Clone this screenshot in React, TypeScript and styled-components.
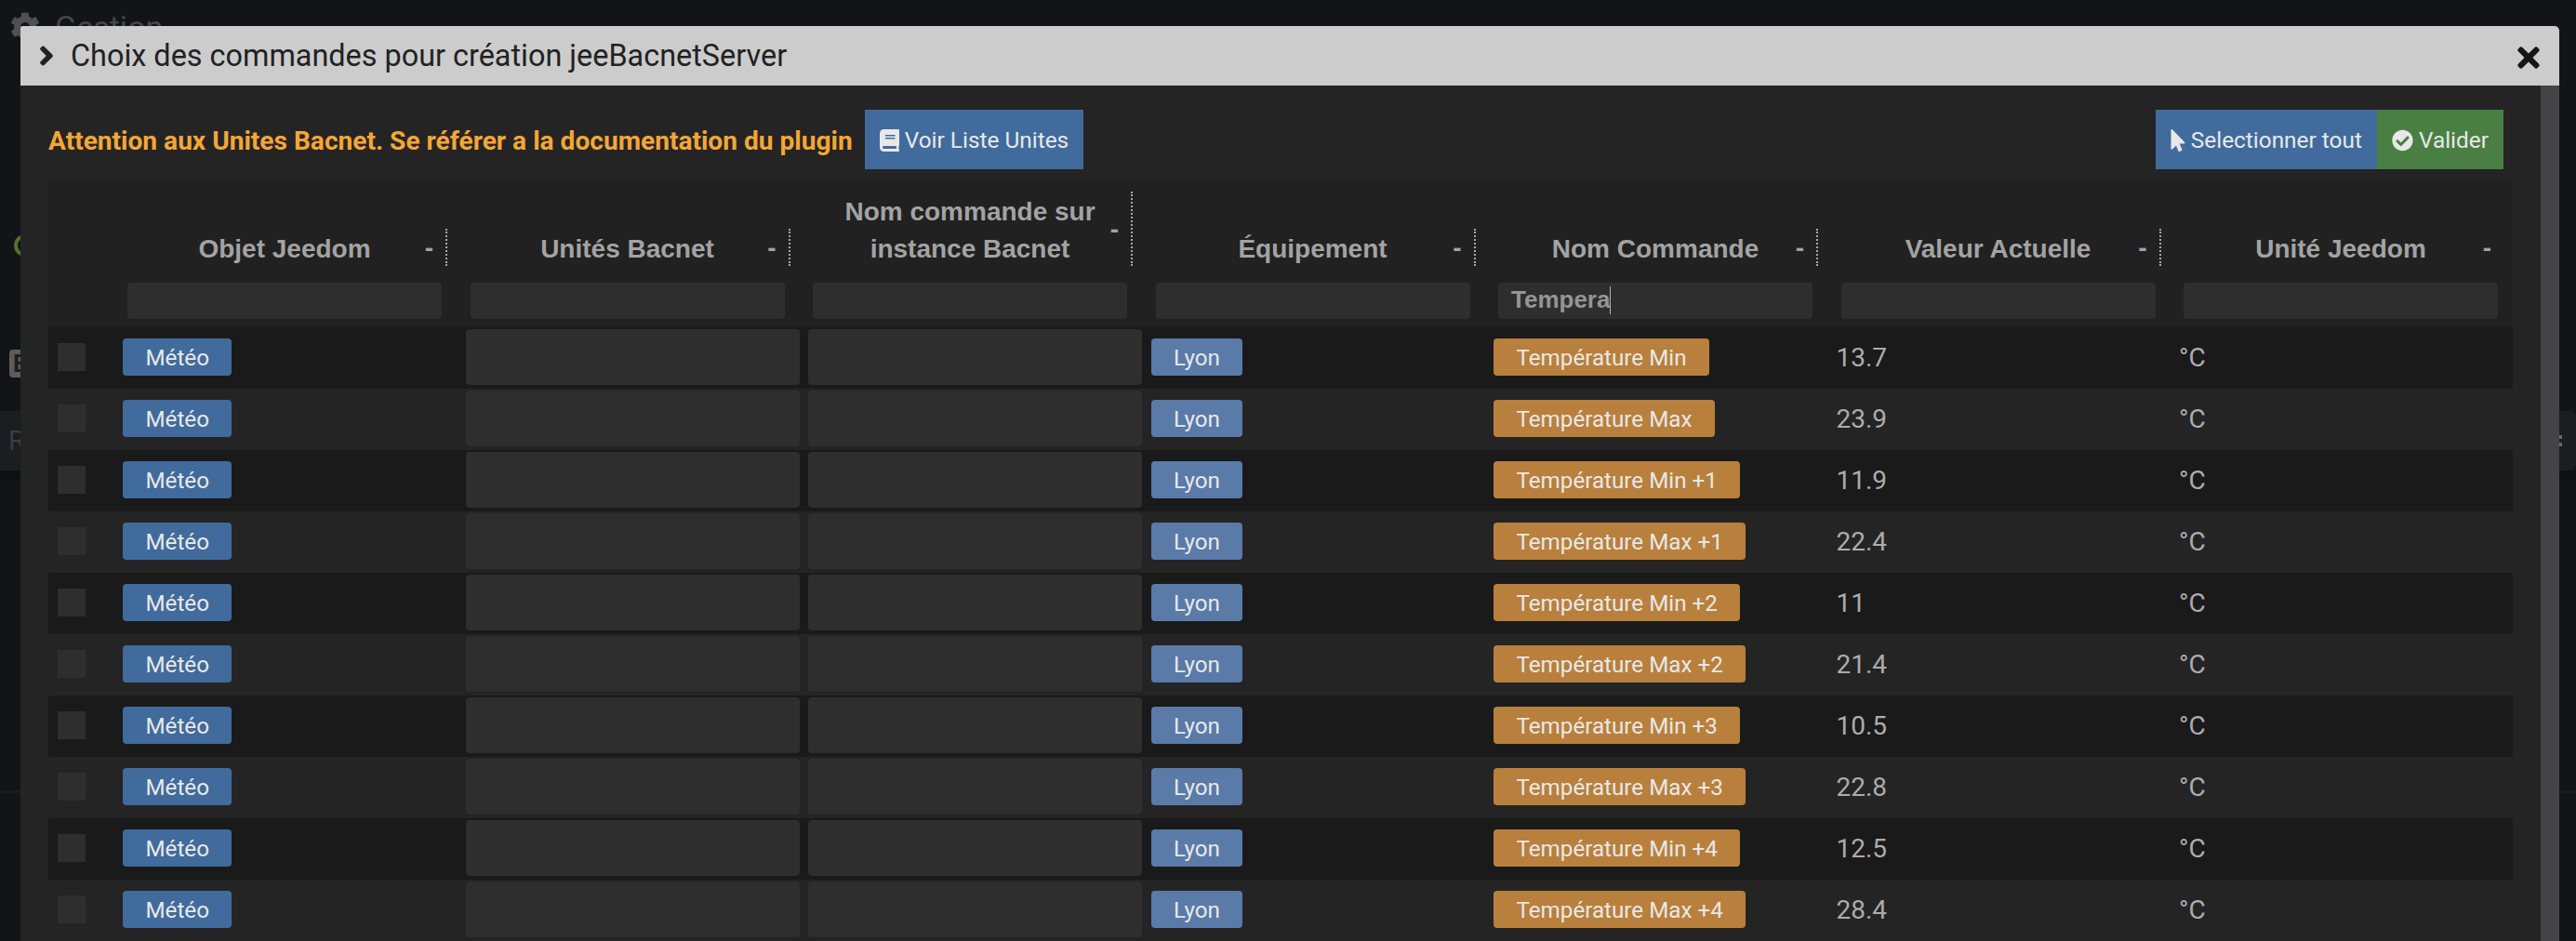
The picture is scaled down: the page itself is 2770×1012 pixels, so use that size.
import React from "react";
import styled, { createGlobalStyle } from "styled-components";
import { FaCog, FaBook, FaMousePointer, FaCheckCircle, FaChevronRight, FaTimes } from "react-icons/fa";

const Global = createGlobalStyle`
  html, body { margin: 0; padding: 0; background: #131417; }
  * { box-sizing: border-box; }
  body { font-family: Roboto, "Liberation Sans", sans-serif; }
`;

const Page = styled.div`
  position: relative;
  width: 2770px;
  height: 1012px;
  overflow: hidden;
  background: #131417;
`;

/* ---- page behind the dialog ---- */
const BackHeading = styled.div`
  display: flex;
  align-items: center;
  gap: 16px;
  padding-left: 11px;
  height: 58px;
  color: #45464a;
  font-size: 34px;
  line-height: 36px;
  svg { width: 32px; height: 32px; color: #505052; }
`;
const BackRing = styled.div`
  margin: 194px 0 0 15px;
  width: 24px;
  height: 24px;
  border: 4px solid #566f2a;
  border-radius: 50%;
`;
const BackButton = styled.div`
  margin: 100px 0 0 10px;
  width: 40px;
  height: 30px;
  padding-left: 4px;
  border-radius: 4px;
  background: #5c5c5e;
  color: #1d1d1f;
  font-size: 26px;
  font-weight: 700;
  line-height: 30px;
`;
const BackPanel = styled.div`
  margin-top: 36px;
  height: 64px;
  display: flex;
  justify-content: space-between;
  align-items: center;
  background: #1b1d20;
  border-radius: 0 6px 6px 0;
  padding-left: 9px;
  color: #3a3c40;
  font-size: 29px;
`;
const BackDots = styled.div`
  width: 3px;
  height: 12px;
  margin-right: 15px;
  border-top: 4px solid #66676a;
  border-bottom: 4px solid #66676a;
`;
const BackBand = styled.div`
  height: 10px;
  background: #0f1012;
`;
const BackRule = styled.div`
  margin-top: 334px;
  height: 3px;
  background: #1c1c1e;
`;

/* ---- dialog ---- */
const Modal = styled.div`
  position: absolute;
  left: 22px;
  top: 28px;
  right: 18px;
  bottom: 0;
  display: flex;
  flex-direction: column;
  background: #242424;
  border-radius: 2px 5px 0 0;
  overflow: hidden;
`;
const TitleBar = styled.div`
  flex: 0 0 64px;
  display: flex;
  align-items: center;
  padding: 0 21px;
  background: #cccccc;
  color: #222222;
  font-size: 32.4px;
`;
const TitleChevron = styled(FaChevronRight)`
  width: 14px;
  height: 22px;
  margin-right: 19px;
  stroke-width: 50;
`;
const TitleText = styled.span`
  flex: 1;
`;
const CloseIcon = styled(FaTimes)`
  width: 24px;
  height: 34px;
  margin-top: 4px;
  color: #161616;
`;
const Body = styled.div`
  flex: 1;
  display: flex;
  min-height: 0;
`;
const Content = styled.div`
  flex: 1;
  padding: 26px 30px 0;
`;
const Scrollbar = styled.div`
  flex: 0 0 20px;
  background: #444446;
`;
const Toolbar = styled.div`
  display: flex;
  align-items: center;
  height: 64px;
  padding-right: 10px;
`;
const Warning = styled.span`
  padding-top: 2px;
  color: #f4a637;
  font-size: 28.1px;
  font-weight: 700;
  margin-right: 13px;
`;
const Action = styled.div<{ $tone: "blue" | "green" }>`
  display: flex;
  align-items: center;
  gap: 6px;
  height: 64px;
  padding: 1px 16px 0;
  background: ${(p) => (p.$tone === "blue" ? "#406b9c" : "#4a7f44")};
  color: #e8e8e8;
  font-size: 24.4px;
`;
const BookIcon = styled(FaBook)`
  width: 21px;
  height: 24px;
`;
const PointerIcon = styled(FaMousePointer)`
  width: 16px;
  height: 24px;
`;
const CheckIcon = styled(FaCheckCircle)`
  width: 23px;
  height: 24px;
`;
const RightActions = styled.div`
  display: flex;
  margin-left: auto;
`;

const Table = styled.div`
  margin-top: 13px;
  width: 2650px;
`;
const Columns = `59.5px repeat(7, 368.5px) 11px`;
const Head = styled.div`
  background: #212121;
  padding-top: 11px;
`;
const HeadRow = styled.div`
  display: grid;
  grid-template-columns: ${Columns};
  align-items: end;
`;
const HeadCell = styled.div<{ $last?: boolean }>`
  position: relative;
  display: flex;
  align-items: center;
  margin-right: -1px;
  padding-left: 25.5px;
  color: #a3a3a3;
  font-family: "Liberation Sans", Arial, sans-serif;
  font-size: 28px;
  font-weight: 700;
  line-height: 40px;
  border-right: ${(p) => (p.$last ? "none" : "2px dotted #a8a8a8")};
`;
const HeadTitle = styled.div`
  width: 338px;
  margin: 2px 0 -2px;
  text-align: center;
`;
const SortMark = styled.span`
  position: absolute;
  right: 13px;
  top: calc(50% + 1px);
  transform: translateY(-50%);
`;
const FilterRow = styled.div`
  display: grid;
  grid-template-columns: ${Columns};
  padding: 18px 0 9px;
`;
const FilterCell = styled.div`
  padding-left: 25.5px;
`;
const FilterBox = styled.div`
  display: flex;
  align-items: center;
  width: 338px;
  height: 39px;
  padding: 0 0 2px 14px;
  background: #2e2e2e;
  border-radius: 4px;
  color: #959595;
  font-family: "Liberation Sans", Arial, sans-serif;
  font-size: 26px;
  font-weight: 700;
`;
const Caret = styled.span`
  width: 1px;
  height: 30px;
  background: #b0b0b0;
`;
const Row = styled.div<{ $odd: boolean }>`
  display: grid;
  grid-template-columns: ${Columns};
  align-items: center;
  height: 66px;
  padding-bottom: 2px;
  background: ${(p) => (p.$odd ? "#1a1a1a" : "#242424")};
`;
const CheckCell = styled.div`
  padding-left: 10px;
`;
const CheckBox = styled.div`
  width: 30px;
  height: 30px;
  background: #2e2e2e;
`;
const Cell = styled.div`
  display: flex;
  align-items: center;
  padding-left: 20.5px;
  color: #acacac;
  font-size: 28px;
`;
const Tag = styled.span<{ $kind: "object" | "equip" | "cmd" }>`
  height: 40px;
  padding: 0 24.5px;
  border-radius: 4px;
  background: ${(p) => (p.$kind === "object" ? "#406b9c" : p.$kind === "equip" ? "#5a7aa8" : "#b8803c")};
  color: #e8e8e8;
  font-size: 24.2px;
  line-height: 42px;
`;
const TextBox = styled.div`
  flex: 0 0 359px;
  height: 60px;
  background: #2e2e2e;
  border-radius: 4px;
`;

const columns = ["Objet Jeedom", "Unités Bacnet", "Nom commande sur instance Bacnet", "Équipement", "Nom Commande", "Valeur Actuelle", "Unité Jeedom"];
const rows: [string, string][] = [
  ["Température Min", "13.7"],
  ["Température Max", "23.9"],
  ["Température Min +1", "11.9"],
  ["Température Max +1", "22.4"],
  ["Température Min +2", "11"],
  ["Température Max +2", "21.4"],
  ["Température Min +3", "10.5"],
  ["Température Max +3", "22.8"],
  ["Température Min +4", "12.5"],
  ["Température Max +4", "28.4"],
];

export default function App() {
  return (
    <Page>
      <Global />
      <BackHeading><FaCog />Gestion</BackHeading>
      <BackRing />
      <BackButton>E</BackButton>
      <BackPanel>R<BackDots /></BackPanel>
      <BackBand />
      <BackRule />
      <Modal>
        <TitleBar>
          <TitleChevron />
          <TitleText>Choix des commandes pour création jeeBacnetServer</TitleText>
          <CloseIcon />
        </TitleBar>
        <Body>
          <Content>
            <Toolbar>
              <Warning>Attention aux Unites Bacnet. Se référer a la documentation du plugin</Warning>
              <Action $tone="blue"><BookIcon />Voir Liste Unites</Action>
              <RightActions>
                <Action $tone="blue"><PointerIcon />Selectionner tout</Action>
                <Action $tone="green"><CheckIcon />Valider</Action>
              </RightActions>
            </Toolbar>
            <Table>
              <Head>
                <HeadRow>
                  <div />
                  {columns.map((c, i) => (
                    <HeadCell key={c} $last={i === columns.length - 1}>
                      <HeadTitle>{c}</HeadTitle>
                      <SortMark>-</SortMark>
                    </HeadCell>
                  ))}
                </HeadRow>
                <FilterRow>
                  <div />
                  {columns.map((c) => (
                    <FilterCell key={c}>
                      <FilterBox>
                        {c === "Nom Commande" && <>Tempera<Caret /></>}
                      </FilterBox>
                    </FilterCell>
                  ))}
                </FilterRow>
              </Head>
              {rows.map(([name, value], i) => (
                <Row key={name} $odd={i % 2 === 0}>
                  <CheckCell><CheckBox /></CheckCell>
                  <Cell><Tag $kind="object">Météo</Tag></Cell>
                  <Cell><TextBox /></Cell>
                  <Cell><TextBox /></Cell>
                  <Cell><Tag $kind="equip">Lyon</Tag></Cell>
                  <Cell><Tag $kind="cmd">{name}</Tag></Cell>
                  <Cell>{value}</Cell>
                  <Cell>°C</Cell>
                </Row>
              ))}
            </Table>
          </Content>
          <Scrollbar />
        </Body>
      </Modal>
    </Page>
  );
}
